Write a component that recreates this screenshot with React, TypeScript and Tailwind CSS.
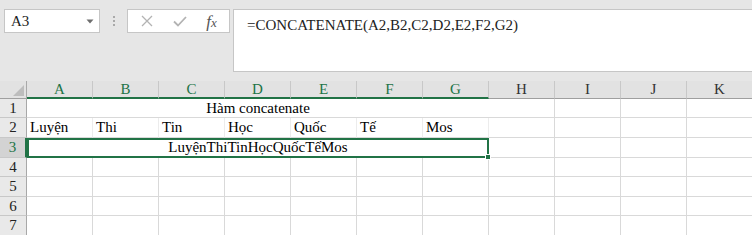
import React from "react";

const COLS = ["A", "B", "C", "D", "E", "F", "G", "H", "I", "J", "K"];
const ROW_H = [19, 20, 20, 19, 20, 19, 20];
const ROW2 = ["Luyện", "Thi", "Tin", "Học", "Quốc", "Tế", "Mos"];

function HeaderCell({ c }: { c: string }) {
  const sel = ["A", "B", "C", "D", "E", "F", "G"].includes(c);
  return (
    <div
      className={
        sel
          ? "h-[18px] flex items-center justify-center border-r border-[#c8c8c8] border-b-2 border-b-[#217346] text-[#217346] bg-[#e2e2e2]"
          : "h-[18px] flex items-center justify-center border-r border-[#c8c8c8] border-b border-b-[#9f9f9f] text-[#333] bg-[#e2e2e2]"
      }
    >
      <span className="text-[15px] leading-none">{c}</span>
    </div>
  );
}

function RowHead({ n, h }: { n: number; h: number }) {
  const sel = n === 3;
  return (
    <div
      style={{ height: h }}
      className={
        sel
          ? "flex items-center justify-center bg-[#d3d3d3] border-r-2 border-r-[#217346] border-b border-b-[#c8c8c8] text-[#217346]"
          : "flex items-center justify-center bg-[#e9e9e9] border-r border-r-[#a8a8a8] border-b border-b-[#c8c8c8] text-[#222]"
      }
    >
      <span className="text-[15px] leading-none">{n}</span>
    </div>
  );
}

export default function App() {
  return (
    <div className="w-[752px] h-[235px] overflow-hidden bg-[#e6e6e6] font-['Liberation_Serif',serif] text-black">
      {/* top toolbar */}
      <div className="h-[81px] flex items-start pt-[9px] pl-[4px]">
        <div className="w-[96px] h-[24px] bg-white border border-[#c6c6c6] flex items-center justify-between pl-[6px] pr-[5px]">
          <span className="text-[15px] text-[#222] leading-none">A3</span>
          <svg width="8" height="5" viewBox="0 0 8 5">
            <path d="M0.5 0.5 L7.5 0.5 L4 4.5 Z" fill="#6e6e6e" />
          </svg>
        </div>
        <div className="w-[27px] h-[24px] flex flex-col items-center justify-center gap-[2px]">
          <div className="w-[2px] h-[2px] bg-[#a9a9a9]" />
          <div className="w-[2px] h-[2px] bg-[#a9a9a9]" />
          <div className="w-[2px] h-[2px] bg-[#a9a9a9]" />
        </div>
        <div className="w-[103px] h-[24px] bg-white border border-[#c6c6c6] flex items-center">
          <div className="w-[36px] flex justify-center pl-[2px]">
            <svg width="12" height="12" viewBox="0 0 12 12">
              <path d="M1 1 L11 11 M11 1 L1 11" stroke="#b3b3b3" strokeWidth="1.3" />
            </svg>
          </div>
          <div className="w-[32px] flex justify-center">
            <svg width="14" height="11" viewBox="0 0 14 11">
              <path d="M1 5.5 L5 9.5 L13 1" stroke="#b3b3b3" strokeWidth="1.8" fill="none" />
            </svg>
          </div>
          <div className="flex-1 flex justify-center pr-[2px]">
            <span className="italic text-[17px] text-[#555] leading-none">
              f<span className="text-[13px]">x</span>
            </span>
          </div>
        </div>
        <div className="ml-[3px] flex-1 h-[63px] bg-white border border-r-0 border-[#c6c6c6] pl-[13px] pt-[3px]">
          <span className="text-[15px] text-[#222]">=CONCATENATE(A2,B2,C2,D2,E2,F2,G2)</span>
        </div>
      </div>

      {/* sheet grid */}
      <div className="grid grid-cols-[27px_repeat(11,66px)]">
        {/* corner */}
        <div className="h-[18px] bg-[#e2e2e2] border-r border-r-[#a8a8a8] border-b border-b-[#9f9f9f] flex items-end justify-end pr-[2px] pb-[2px]">
          <svg width="11" height="11" viewBox="0 0 11 11">
            <path d="M11 0 L11 11 L0 11 Z" fill="#bdbdbd" />
          </svg>
        </div>
        {COLS.map((c) => (
          <HeaderCell key={c} c={c} />
        ))}

        {/* row 1 */}
        <RowHead n={1} h={ROW_H[0]} />
        <div className="col-span-7 bg-white border-b border-[#d9d9d9] flex items-end justify-center pb-[1px]" style={{ height: ROW_H[0] }}>
          <span className="text-[15px] leading-none">Hàm concatenate</span>
        </div>
        {COLS.slice(7).map((c) => (
          <div key={c} className="bg-white border-b border-r border-[#d9d9d9]" style={{ height: ROW_H[0] }} />
        ))}

        {/* row 2 */}
        <RowHead n={2} h={ROW_H[1]} />
        {ROW2.map((t) => (
          <div key={t} className="bg-white border-b border-r border-[#ececec] border-b-[#d9d9d9] flex items-end pl-[3px] pb-[2px]" style={{ height: ROW_H[1] }}>
            <span className="text-[15px] leading-none">{t}</span>
          </div>
        ))}
        {COLS.slice(7).map((c) => (
          <div key={c} className="bg-white border-b border-r border-[#d9d9d9]" style={{ height: ROW_H[1] }} />
        ))}

        {/* row 3 */}
        <RowHead n={3} h={ROW_H[2]} />
        <div className="relative col-span-7 bg-white border-2 border-[#217346] flex items-end justify-center pb-[1px]" style={{ height: ROW_H[2] }}>
          <span className="text-[15px] leading-none">LuyệnThiTinHọcQuốcTếMos</span>
          <div className="absolute right-[-4px] bottom-[-4px] w-[6px] h-[6px] bg-[#217346] border border-white" />
        </div>
        {COLS.slice(7).map((c) => (
          <div key={c} className="bg-white border-b border-r border-[#d9d9d9]" style={{ height: ROW_H[2] }} />
        ))}

        {/* rows 4-7 */}
        {[4, 5, 6, 7].map((n) => (
          <React.Fragment key={n}>
            <RowHead n={n} h={ROW_H[n - 1]} />
            {COLS.map((c) => (
              <div key={c} className="bg-white border-b border-r border-[#d9d9d9]" style={{ height: ROW_H[n - 1] }} />
            ))}
          </React.Fragment>
        ))}
      </div>
    </div>
  );
}
